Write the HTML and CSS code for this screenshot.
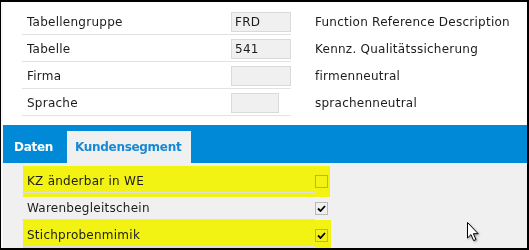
FILE: index.html
```html
<!DOCTYPE html>
<html lang="de">
<head>
  <meta charset="UTF-8" />
  <title>Tabellenpflege</title>
  <link rel="stylesheet" href="styles.css">
</head>
<body>

<div class="frame">
  <div class="main">

    <section class="header">
      <div class="hrow">
        <span class="hlabel">Tabellengruppe</span>
        <span class="hvalue"><span class="box">FRD</span></span>
        <span class="hdesc">Function Reference Description</span>
      </div>
      <div class="hrow">
        <span class="hlabel">Tabelle</span>
        <span class="hvalue"><span class="box">541</span></span>
        <span class="hdesc">Kennz. Qualitätssicherung</span>
      </div>
      <div class="hrow">
        <span class="hlabel">Firma</span>
        <span class="hvalue"><span class="box"></span></span>
        <span class="hdesc">firmenneutral</span>
      </div>
      <div class="hrow">
        <span class="hlabel">Sprache</span>
        <span class="hvalue"><span class="box short"></span></span>
        <span class="hdesc">sprachenneutral</span>
      </div>
    </section>

    <nav class="tabs">
      <span class="tab">Daten</span>
      <span class="tab active">Kundensegment</span>
    </nav>

    <section class="fields">
      <!-- highlighter marks lying over the rows -->
      <div class="mark mark-1"></div>
      <div class="mark mark-2"></div>

      <div class="frow">
        <span class="flabel">KZ änderbar in WE</span>
        <span class="check"></span>
      </div>
      <div class="frow">
        <span class="flabel">Warenbegleitschein</span>
        <span class="check">
          <svg width="9" height="7" viewBox="0 0 9 7"><path d="M1 3.5 L3.5 6 L8 1" fill="none" stroke="#000" stroke-width="1.8"/></svg>
        </span>
      </div>
      <div class="frow">
        <span class="flabel">Stichprobenmimik</span>
        <span class="check">
          <svg width="9" height="7" viewBox="0 0 9 7"><path d="M1 3.5 L3.5 6 L8 1" fill="none" stroke="#000" stroke-width="1.8"/></svg>
        </span>
      </div>

      <svg class="cursor" width="14" height="22" viewBox="0 0 14 22">
        <path d="M1.5 1.5 L1.5 17 L5 13.6 L7.6 19.6 L10 18.6 L7.4 12.7 L12.2 12.7 Z" fill="#fff" stroke="#000" stroke-width="1"/>
      </svg>
    </section>

  </div>
</div>

</body>
</html>
```

FILE: styles.css
```css
body {
  margin: 0;
  font-family: "DejaVu Sans", Verdana, sans-serif;
  font-size: 12px;
  color: #1c1c1c;
  background: #fff;
}

.frame {
  width: 529px;
  height: 250px;
  box-sizing: border-box;
  border-top: 2px solid #000;
  border-left: 1px solid #000;
  border-right: 2px solid #000;
  border-bottom: 2px solid #000;
  overflow: hidden;
}

.main {
  height: 100%;
  border-left: 2px solid #f8f8f8;
  background: #f0f0f0;
}

/* header block */
.header {
  background: #fff;
  padding: 6px 0 9px 19px;
}

.hrow {
  display: flex;
  height: 27px;
}

.hlabel {
  width: 204px;
  height: 26px;
  line-height: 28px;
  padding-left: 5px;
  border-bottom: 1px solid #e2e2e2;
  letter-spacing: 0.25px;
}

.hvalue {
  width: 60px;
  height: 26px;
  border-bottom: 1px solid #e2e2e2;
}

.box {
  display: block;
  box-sizing: border-box;
  width: 60px;
  height: 20px;
  margin-top: 4px;
  padding-left: 3px;
  line-height: 19px;
  border: 1px solid #dadada;
  background: #f0f0f0;
  letter-spacing: 0.25px;
}

.box.short {
  width: 48px;
}

.hdesc {
  margin-left: 24px;
  line-height: 28px;
  letter-spacing: 0.25px;
}

/* tab bar */
.tabs {
  display: flex;
  align-items: flex-end;
  gap: 4px;
  height: 38px;
  box-sizing: border-box;
  padding: 6px 0 0 3px;
  background: #0089d6;
}

.tab {
  height: 32px;
  line-height: 32px;
  padding: 0 10px 0 8px;
  font-weight: bold;
  letter-spacing: -0.3px;
  color: #fff;
}

.tab.active {
  background: #f0f0f0;
  color: #1589d6;
}

/* field list */
.fields {
  position: relative;
  padding: 3px 0 0 19px;
}

.frow {
  display: flex;
  align-items: flex-start;
  height: 27px;
}

.flabel {
  position: relative;
  z-index: 1;
  width: 288px;
  height: 19px;
  padding: 7px 0 0 5px;
  line-height: 17px;
  border-bottom: 1px solid #dedede;
  letter-spacing: 0.25px;
}

.check {
  position: relative;
  z-index: 1;
  display: flex;
  align-items: center;
  justify-content: center;
  width: 11px;
  height: 11px;
  margin-top: 9px;
  border: 1px solid #c6c6c6;
  background: #fff;
  mix-blend-mode: multiply;
}

.mark {
  position: absolute;
  z-index: 0;
  left: 20px;
  background: rgba(243, 243, 0, 0.92);
}

.mark-1 {
  top: 3px;
  width: 307px;
  height: 31px;
}

.mark-2 {
  top: 57px;
  width: 308px;
  height: 40px;
}

.cursor {
  position: absolute;
  z-index: 2;
  left: 463px;
  top: 58px;
  filter: drop-shadow(1px 1px 1px rgba(0, 0, 0, 0.35));
}
```
